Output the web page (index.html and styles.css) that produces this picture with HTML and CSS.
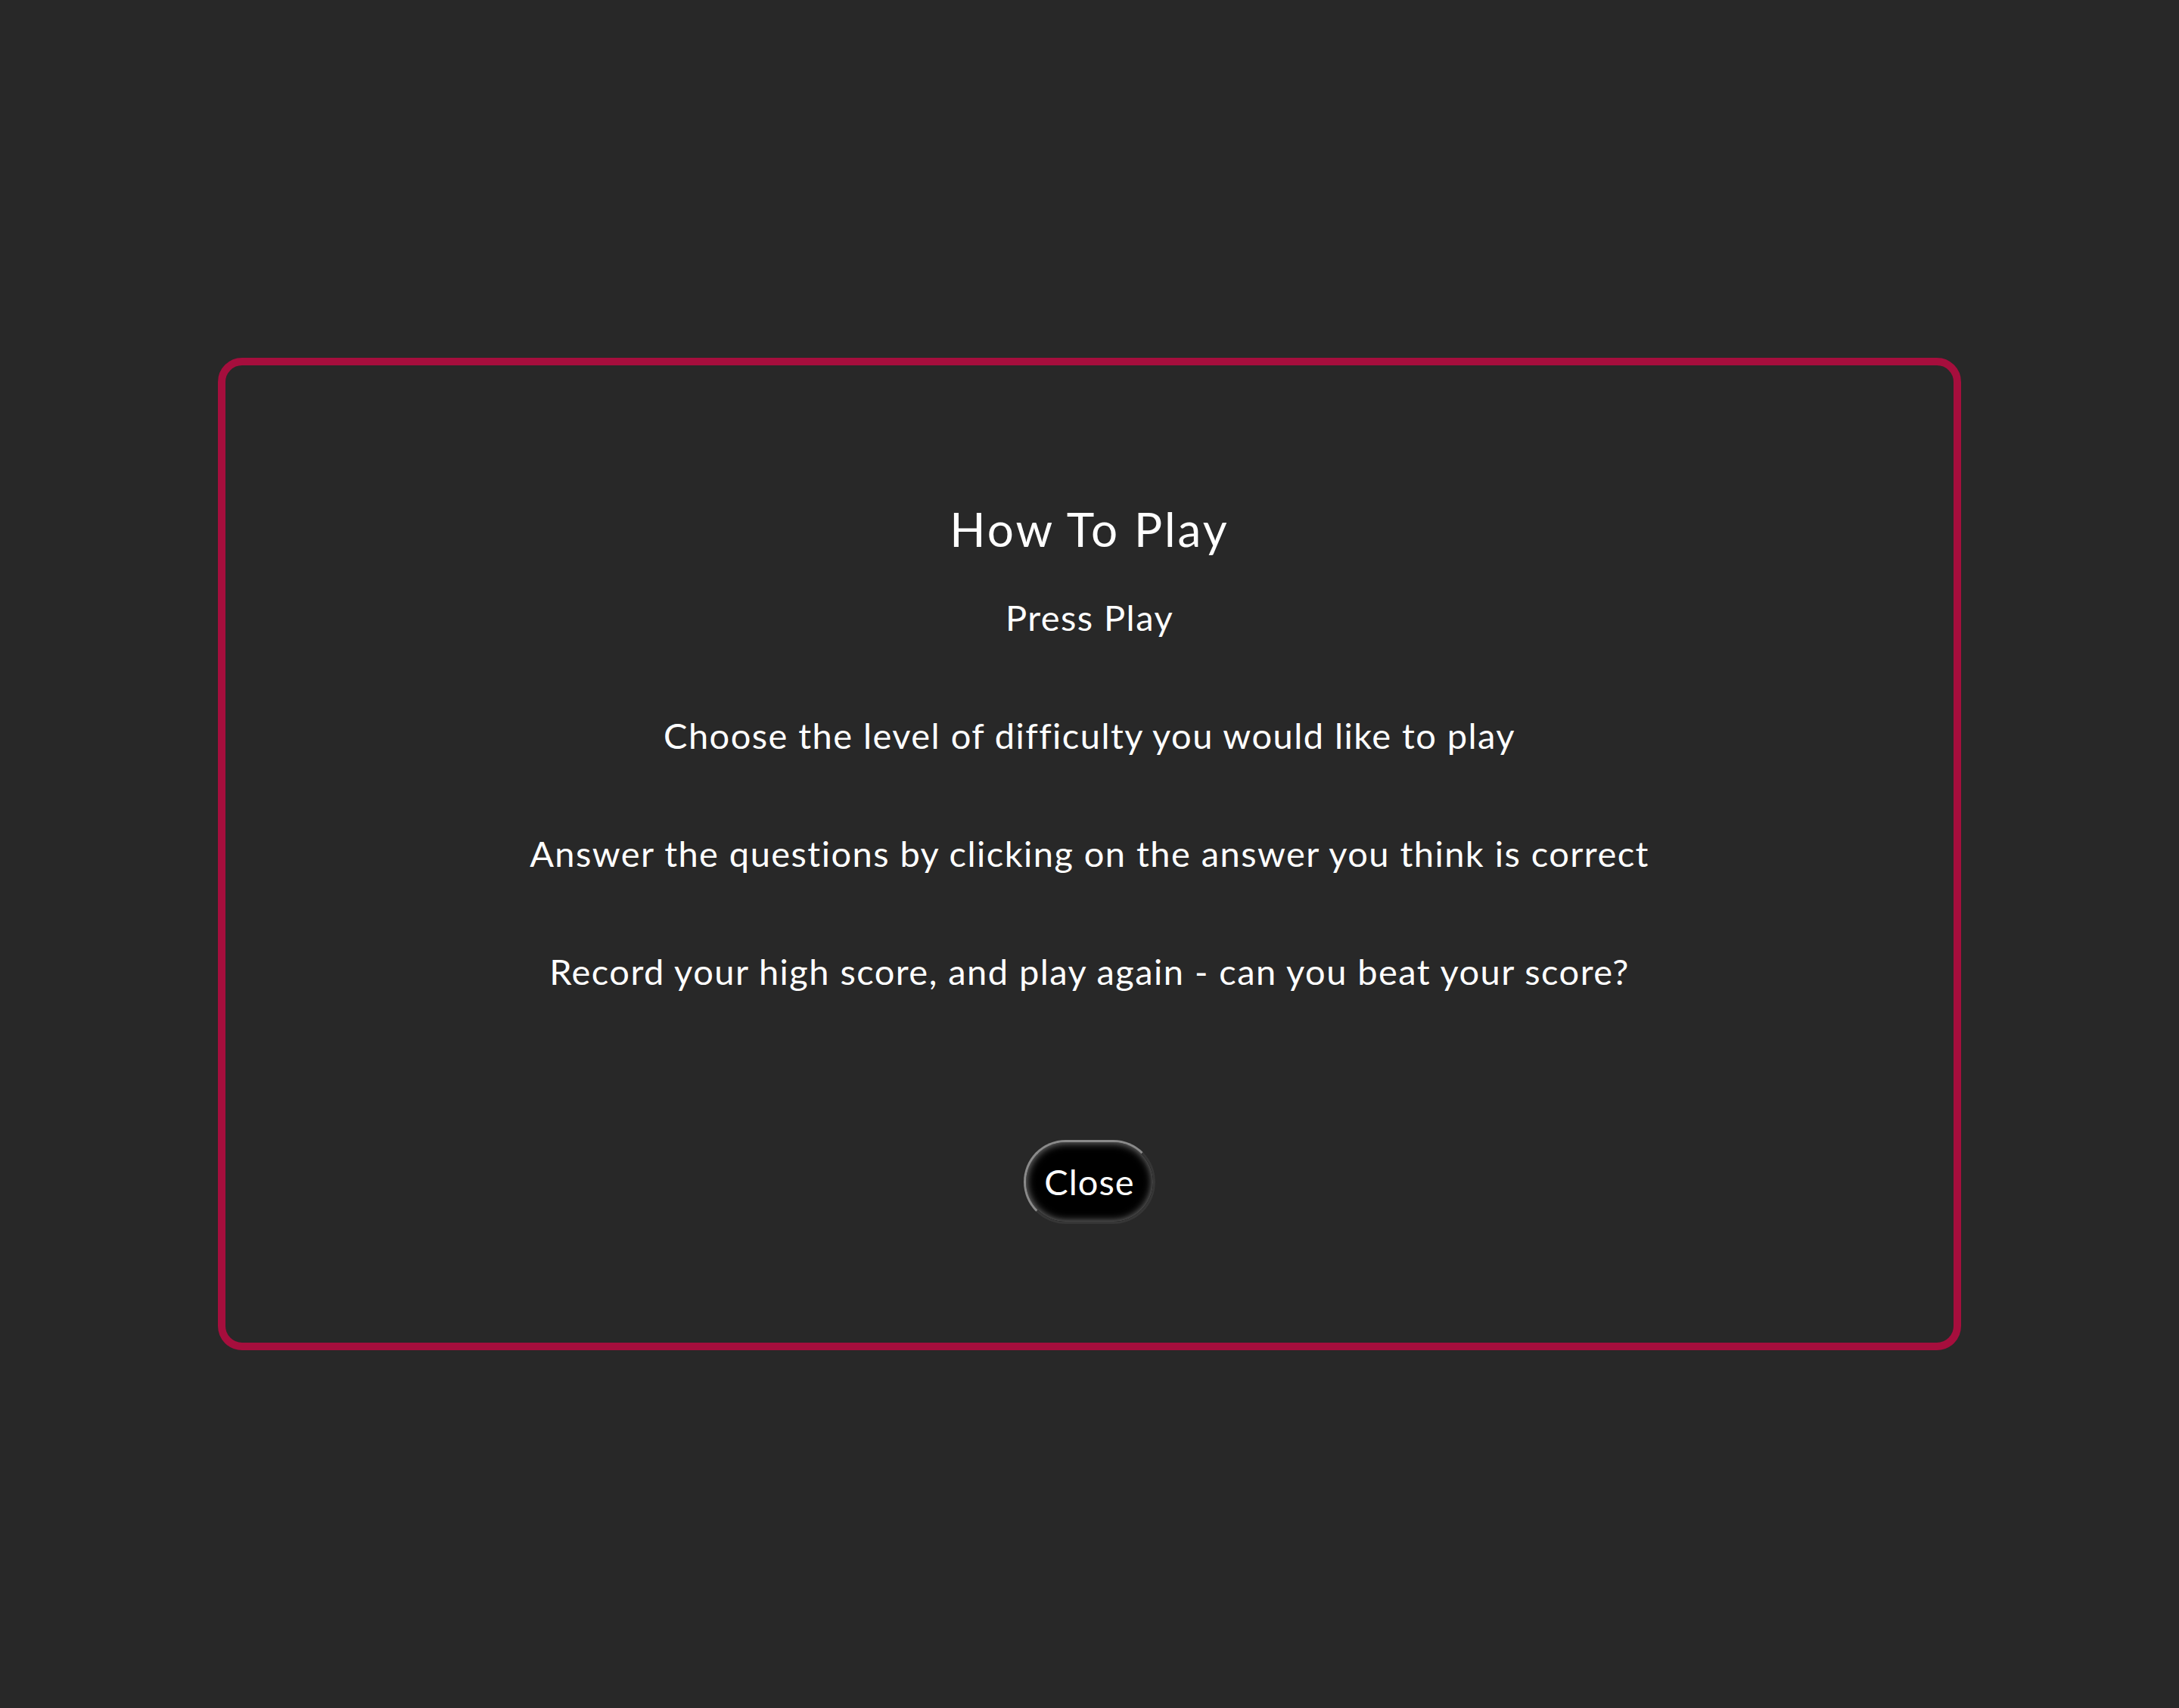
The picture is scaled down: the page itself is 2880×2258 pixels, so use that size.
FILE: index.html
```html
<!DOCTYPE html>
<html lang="en">
<head>
<meta charset="utf-8">
<title>How To Play</title>
<link rel="stylesheet" href="styles.css">
</head>
<body>
<div class="modal">
  <h2 class="modal-title">How To Play</h2>
  <p class="step">Press Play</p>
  <p class="step">Choose the level of difficulty you would like to play</p>
  <p class="step">Answer the questions by clicking on the answer you think is correct</p>
  <p class="step">Record your high score, and play again - can you beat your score?</p>
  <button class="close-btn" type="button">Close</button>
</div>
</body>
</html>
```

FILE: styles.css
```css
html, body {
  margin: 0;
  padding: 0;
}

body {
  background: #282828;
  color: #ffffff;
  font-family: "Lato", "Noto Sans", sans-serif;
  min-height: 2258px;
  display: flex;
  align-items: center;
  justify-content: center;
}

.modal {
  box-sizing: border-box;
  width: 2304px;
  height: 1312px;
  border: 10px solid #a60e3d;
  border-radius: 32px;
  padding-top: 185px;
  display: flex;
  flex-direction: column;
  align-items: center;
  text-align: center;
}

.modal-title {
  margin: 0;
  font-size: 62px;
  line-height: 62px;
  font-weight: 400;
  letter-spacing: 3px;
}

.step {
  margin: 0;
  font-size: 47px;
  line-height: 47px;
  font-weight: 400;
  letter-spacing: 1.45px;
}

.modal-title + .step {
  margin-top: 63px;
}

.step + .step {
  margin-top: 109px;
}

.close-btn {
  margin-top: 199px;
  font-family: inherit;
  font-size: 47px;
  line-height: 47px;
  letter-spacing: 1px;
  color: #ffffff;
  background: #000000;
  border: 3px outset #8a8a8a;
  border-radius: 56px;
  padding: 29px 24px;
  box-shadow: inset 0 0 12px rgba(255, 255, 255, 0.55);
}
```
